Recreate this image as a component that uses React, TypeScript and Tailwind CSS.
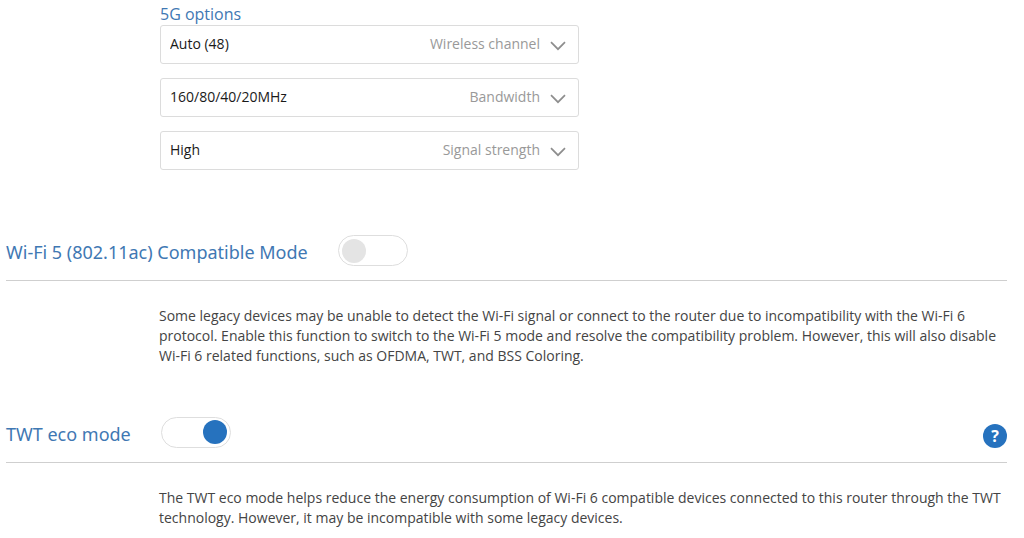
import { useState, type ReactNode } from "react";

type OptionProps = { id: string; label: string; values: string[] };

function OptionSelect({ id, label, values }: OptionProps) {
  return (
    <div className="grid items-center">
      <select
        id={id}
        className="col-start-1 row-start-1 h-[39px] w-full appearance-none rounded-[3px] border border-[#dcdcdc] bg-white px-[9px] pb-px text-sm text-[#1a1a1a]"
      >
        {values.map((value) => (
          <option key={value}>{value}</option>
        ))}
      </select>
      <div className="pointer-events-none col-start-1 row-start-1 flex items-center justify-end gap-[10px] pr-[13px]">
        <label htmlFor={id} className="pb-px text-sm text-[#999]">
          {label}
        </label>
        <svg
          className="mt-[3px] h-[10px] w-4"
          viewBox="0 0 16 10"
          fill="none"
          stroke="#8e8e8e"
          strokeWidth="1.7"
          aria-hidden="true"
        >
          <path d="M1 1.2 8 8.2l7-7" />
        </svg>
      </div>
    </div>
  );
}

type SwitchProps = { id: string; initial: boolean };

function Switch({ id, initial }: SwitchProps) {
  const [on, setOn] = useState(initial);
  return (
    <span className="grid h-[31px] w-[70px] items-center rounded-full border border-[#dedede] bg-white px-[3px]">
      <input
        id={id}
        type="checkbox"
        role="switch"
        checked={on}
        onChange={(event) => setOn(event.target.checked)}
        className="peer col-start-1 row-start-1 h-full w-full cursor-pointer appearance-none rounded-full"
      />
      <span className="pointer-events-none col-start-1 row-start-1 size-6 rounded-full bg-[#e4e4e4] peer-checked:justify-self-end peer-checked:bg-[#2672be]" />
    </span>
  );
}

type SectionProps = {
  id: string;
  title: string;
  initial: boolean;
  help?: boolean;
  children: ReactNode;
};

function Section({ id, title, initial, help, children }: SectionProps) {
  return (
    <section>
      <div className="flex items-center border-b border-[#cfcfcf] pb-[14px]">
        <h2 className="mr-[30px] pt-[3px] font-['Noto_Sans',sans-serif] text-lg leading-7 text-[#3f78b3]">
          <label htmlFor={id}>{title}</label>
        </h2>
        <Switch id={id} initial={initial} />
        {help && (
          <button
            type="button"
            aria-label={`Help for ${title}`}
            className="mt-2 ml-auto flex size-6 items-center justify-center rounded-full bg-[#2672be] text-base font-bold text-white"
          >
            ?
          </button>
        )}
      </div>
      <p className="mt-[25px] ml-[153px] text-sm leading-5 text-[#444]">{children}</p>
    </section>
  );
}

export default function App() {
  return (
    <main className="bg-white pr-[17px] pl-[6px] font-['Open_Sans',sans-serif]">
      <section className="ml-[154px] max-w-[419px] pt-1">
        <h3 className="text-base leading-[21px] text-[#3f78b3]">5G options</h3>
        <div className="flex flex-col gap-[14px]">
          <OptionSelect id="channel" label="Wireless channel" values={["Auto (48)", "36", "40", "44", "48"]} />
          <OptionSelect id="bandwidth" label="Bandwidth" values={["160/80/40/20MHz", "80/40/20MHz", "20MHz"]} />
          <OptionSelect id="strength" label="Signal strength" values={["High", "Medium", "Low"]} />
        </div>
      </section>
      <div className="mt-[65px] flex flex-col gap-[50px]">
        <Section id="compatible" title="Wi-Fi 5 (802.11ac) Compatible Mode" initial={false}>
          Some legacy devices may be unable to detect the Wi-Fi signal or connect to the router due to
          incompatibility with the Wi-Fi 6 protocol. Enable this function to switch to the Wi-Fi 5 mode
          and resolve the compatibility problem. However, this will also disable Wi-Fi 6 related
          functions, such as OFDMA, TWT, and BSS Coloring.
        </Section>
        <Section id="twt" title="TWT eco mode" initial={true} help>
          The TWT eco mode helps reduce the energy consumption of Wi-Fi 6 compatible devices connected to
          this router through the TWT technology. However, it may be incompatible with some legacy
          devices.
        </Section>
      </div>
    </main>
  );
}
